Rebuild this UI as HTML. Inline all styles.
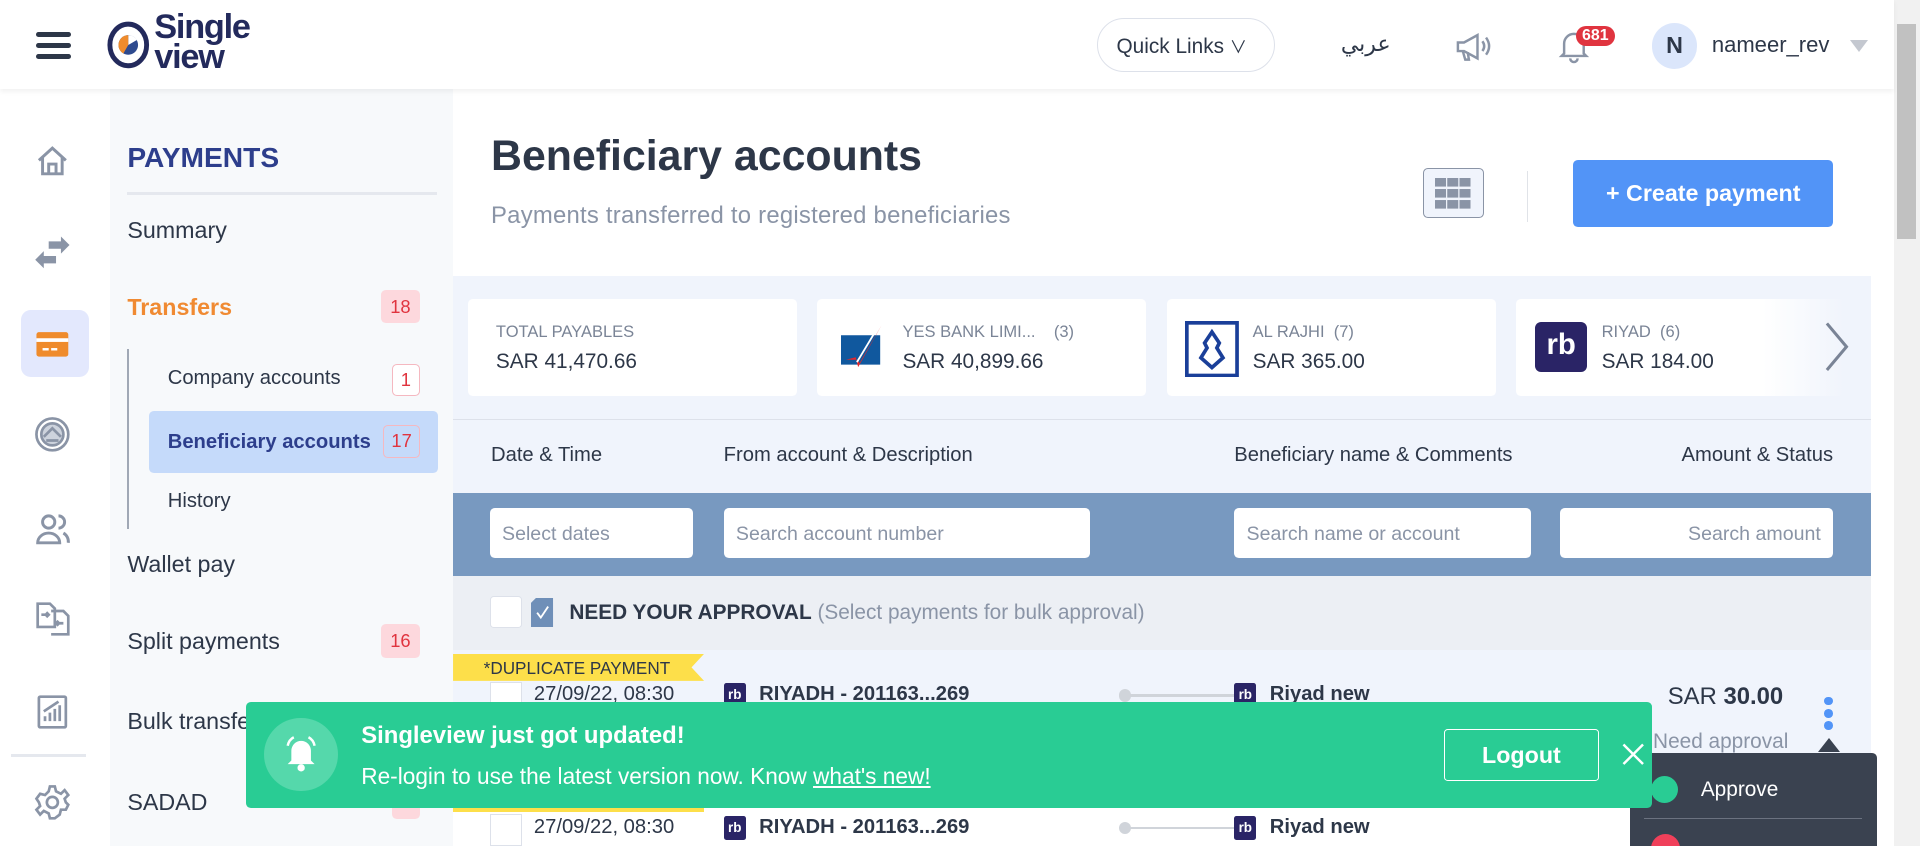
<!DOCTYPE html>
<html><head><meta charset="utf-8"><style>
*{box-sizing:border-box;margin:0;padding:0}
html,body{width:1920px;height:846px;overflow:hidden;background:#fff}
#r{zoom:1.22449;width:1568px;height:691px;position:relative;overflow:hidden;font-family:"Liberation Sans","Noto Sans CJK SC",sans-serif;color:#2d3748}
.a{position:absolute}
.t{white-space:nowrap}
.badge{position:absolute;font-size:15px;text-align:center;border-radius:4px}
.inp{position:absolute;background:#fff;border-radius:4px;height:41px;font-size:16px;color:#8a94a6;padding:12px 10px;white-space:nowrap}
.card{position:absolute;top:244px;height:79px;width:269px;background:#fff;border-radius:4px}
.card .l{position:absolute;top:19px;font-size:13.5px;color:#7a8496;white-space:nowrap}
.card .v{position:absolute;top:42px;font-size:17px;color:#2d3748;white-space:nowrap}
.ic{position:absolute;left:28px}
.rb{position:absolute;width:18px;height:20px;background:#2a2466;border-radius:2px;color:#fff;font-size:11px;font-weight:bold;text-align:center;line-height:20px}
</style></head><body><div id="r">
<!-- header -->
<div class="a" style="left:0;top:0;width:1547px;height:73px;background:#fff;box-shadow:0 2px 4px rgba(0,0,0,.06);z-index:2">
 <div class="a" style="left:29px;top:26px;width:29px;height:4px;background:#2d3748;border-radius:2px"></div>
 <div class="a" style="left:29px;top:35px;width:29px;height:4px;background:#2d3748;border-radius:2px"></div>
 <div class="a" style="left:29px;top:44px;width:29px;height:4px;background:#2d3748;border-radius:2px"></div>
 <svg class="a" style="left:86px;top:15px" width="40" height="44" viewBox="0 0 40 44"><ellipse cx="19" cy="22" rx="15" ry="17" fill="none" stroke="#232a5c" stroke-width="4"/><circle cx="19" cy="22" r="8" fill="#2e4a8f"/><path d="M19 22 L19 14 A8 8 0 0 1 26 18 Z" fill="#fff"/><path d="M19 22 L11 22 A8 8 0 0 1 19 14 Z" fill="#ef8b2c"/><path d="M19 22 L11 22 A8 8 0 0 0 15 29 Z" fill="#ef8b2c"/></svg>
 <div class="a t" style="left:126px;top:11px;font-size:28px;font-weight:bold;line-height:24px;color:#232a5c;letter-spacing:-1px">Single<br>view</div>
 <div class="a t" style="left:896px;top:15px;width:145px;height:44px;border:1px solid #dde1ea;border-radius:22px;font-size:17px;padding:11px 15px">Quick Links <span style="font-size:14px">&#8744;</span></div>
 <div class="a t" style="left:1095px;top:25px;font-size:18px">عربي</div>
 <svg class="a" style="left:1187px;top:24px" width="34" height="28" viewBox="0 0 34 28" fill="none" stroke="#8a94a6" stroke-width="2"><path d="M4 11 L4 18 L9 18 L20 24 L20 5 L9 11 Z"/><path d="M8 18 L10 25 L13 25 L12 19"/><path d="M24 10 Q27 14 24 18"/><path d="M27 7 Q32 14 27 21"/></svg>
 <svg class="a" style="left:1272px;top:24px" width="26" height="28" viewBox="0 0 26 28" fill="none" stroke="#8a94a6" stroke-width="2"><path d="M5 20 L5 12 A8 8 0 0 1 21 12 L21 20 L23 22 L3 22 Z"/><path d="M10 24 A3 3 0 0 0 16 24"/></svg>
 <div class="a t" style="left:1287px;top:21px;background:#e0343f;color:#fff;border-radius:9px;font-size:13px;font-weight:bold;padding:1px 5px">681</div>
 <div class="a" style="left:1349px;top:19px;width:37px;height:37px;border-radius:50%;background:#dbe6fb;font-size:19px;font-weight:bold;text-align:center;line-height:37px">N</div>
 <div class="a t" style="left:1398px;top:26px;font-size:18px">nameer_rev</div>
 <div class="a" style="left:1511px;top:33px;border-left:8px solid transparent;border-right:8px solid transparent;border-top:10px solid #c4c8d0"></div>
</div>
<!-- scrollbar -->
<div class="a" style="left:1547px;top:0;width:21px;height:691px;background:#f1f1f1"></div>
<div class="a" style="left:1549px;top:20px;width:16px;height:175px;background:#c1c1c1"></div>
<!-- icon rail -->
<div class="a" style="left:0;top:73px;width:90px;height:618px;background:#fff"></div>
<svg class="ic" style="top:116px" width="30" height="30" viewBox="0 0 30 30" fill="none" stroke="#8a94a6" stroke-width="2.4"><path d="M4 15 L15 5 L26 15 M7 12 L7 26 L23 26 L23 12 M12 26 L12 18 L18 18 L18 26"/></svg>
<svg class="ic" style="top:191px" width="30" height="30" viewBox="0 0 30 30" fill="#8a94a6"><path d="M12 6 L22 6 L22 2 L29 9 L22 16 L22 12 L12 12 Z"/><path d="M18 18 L8 18 L8 14 L1 21 L8 28 L8 24 L18 24 Z"/></svg>
<div class="a" style="left:17px;top:253px;width:56px;height:55px;background:#e3e8fd;border-radius:8px"></div>
<svg class="ic" style="top:266px" width="30" height="30" viewBox="0 0 30 30"><rect x="2" y="5" width="26" height="20" rx="2" fill="#ef8b2c"/><rect x="2" y="10" width="26" height="3" fill="#fff"/><rect x="7" y="18" width="5" height="2" fill="#fff"/><rect x="14" y="18" width="5" height="2" fill="#fff"/></svg>
<svg class="ic" style="top:340px" width="30" height="30" viewBox="0 0 30 30" fill="none" stroke="#8a94a6" stroke-width="2.2"><circle cx="15" cy="15" r="13"/><circle cx="15" cy="15" r="9" fill="#cdd3dd"/><path d="M8 17 L15 10 L22 17 M10 20 L20 20"/></svg>
<svg class="ic" style="top:417px" width="30" height="30" viewBox="0 0 30 30" fill="none" stroke="#8a94a6" stroke-width="2.4"><circle cx="12" cy="9" r="5"/><path d="M3 26 A9 8 0 0 1 21 26 Z"/><path d="M20 4 A5 5 0 0 1 20 14 M24 18 A8 8 0 0 1 28 26"/></svg>
<svg class="ic" style="top:490px" width="30" height="30" viewBox="0 0 30 30" fill="none" stroke="#8a94a6" stroke-width="2.2"><path d="M3 3 L13 3 L17 7 L17 22 L3 22 Z"/><path d="M14 9 L24 9 L28 13 L28 28 L14 28"/><path d="M6 12 L12 12 M10 10 L12 12 L10 14 M24 19 L18 19 M20 17 L18 19 L20 21"/></svg>
<svg class="ic" style="top:566px" width="30" height="30" viewBox="0 0 30 30" fill="none" stroke="#8a94a6" stroke-width="2.2"><rect x="4" y="3" width="22" height="25" rx="1"/><path d="M9 23 L9 19 M13 23 L13 16 M17 23 L17 13 M21 23 L21 10 M8 15 L20 7"/></svg>
<div class="a" style="left:9px;top:616px;width:61px;height:2px;background:#e5e8ee"></div>
<svg class="ic" style="top:640px" width="30" height="30" viewBox="0 0 30 30" fill="none" stroke="#8a94a6" stroke-width="2.2"><circle cx="15" cy="15" r="4.5"/><path d="M13 2 L17 2 L18 6 L22 8 L25 5 L28 9 L25 12 L26 15 L28 17 L26 21 L22 21 L21 25 L17 28 L13 28 L12 24 L8 22 L5 25 L2 21 L5 18 L4 15 L2 12 L5 8 L9 9 L12 6 Z"/></svg>
<!-- sidebar -->
<div class="a" style="left:90px;top:73px;width:280px;height:618px;background:#f7f9fb"></div>
<div class="a t" style="left:104px;top:116px;font-size:23px;font-weight:bold;color:#2d3e8c">PAYMENTS</div>
<div class="a" style="left:104px;top:157px;width:253px;height:2px;background:#e5e8ee"></div>
<div class="a t" style="left:104px;top:177px;font-size:19px">Summary</div>
<div class="a t" style="left:104px;top:240px;font-size:19px;font-weight:bold;color:#f08a32">Transfers</div>
<div class="badge" style="left:311px;top:237px;width:32px;height:27px;background:#fdd8dd;color:#e0343f;line-height:27px">18</div>
<div class="a" style="left:104px;top:285px;width:1px;height:147px;background:#a0a8b5"></div>
<div class="a t" style="left:137px;top:300px;font-size:16.5px">Company accounts</div>
<div class="badge" style="left:320px;top:297px;width:23px;height:26px;border:1px solid #f5b8c0;color:#e0343f;line-height:24px;background:#fff">1</div>
<div class="a" style="left:122px;top:336px;width:236px;height:50px;background:#c5dafa;border-radius:4px"></div>
<div class="a t" style="left:137px;top:352px;font-size:16.5px;font-weight:bold;color:#2d3e8c">Beneficiary accounts</div>
<div class="badge" style="left:313px;top:347px;width:30px;height:27px;border:1px solid #f5b8c0;color:#e0343f;line-height:25px">17</div>
<div class="a t" style="left:137px;top:400px;font-size:16.5px">History</div>
<div class="a t" style="left:104px;top:450px;font-size:19px">Wallet pay</div>
<div class="a t" style="left:104px;top:513px;font-size:19px">Split payments</div>
<div class="badge" style="left:311px;top:510px;width:32px;height:27px;background:#fdd8dd;color:#e0343f;line-height:27px">16</div>
<div class="a t" style="left:104px;top:578px;font-size:19px">Bulk transfers</div>
<div class="a t" style="left:104px;top:644px;font-size:19px">SADAD</div>
<div class="badge" style="left:320px;top:645px;width:23px;height:24px;background:#fdd8dd;color:#e0343f">2</div>
<!-- main header -->
<div class="a t" style="left:401px;top:108px;font-size:35px;font-weight:bold;color:#2d3748">Beneficiary accounts</div>
<div class="a t" style="left:401px;top:165px;font-size:19.5px;color:#8a94a6;letter-spacing:0.2px">Payments transferred to registered beneficiaries</div>
<div class="a" style="left:1162px;top:137px;width:50px;height:41px;border:1px solid #8a94a6;border-radius:4px;background:#f0f4fc"></div>
<svg class="a" style="left:1172px;top:145px" width="30" height="26"><g fill="#8a94a6"><rect x="0" y="0" width="9" height="7"/><rect x="10" y="0" width="9" height="7"/><rect x="20" y="0" width="9" height="7"/><rect x="0" y="9" width="9" height="7"/><rect x="10" y="9" width="9" height="7"/><rect x="20" y="9" width="9" height="7"/><rect x="0" y="18" width="9" height="7"/><rect x="10" y="18" width="9" height="7"/><rect x="20" y="18" width="9" height="7"/></g></svg>
<div class="a" style="left:1247px;top:140px;width:1px;height:41px;background:#e0e3e8"></div>
<div class="a t" style="left:1285px;top:131px;width:212px;height:54px;background:#5294f7;border-radius:4px;color:#fff;font-size:19px;font-weight:bold;text-align:center;line-height:54px">+ Create payment</div>
<!-- cards -->
<div class="a" style="left:370px;top:225px;width:1158px;height:118px;background:#f0f4fc"></div>
<div class="card" style="left:382px"><div class="l" style="left:23px">TOTAL PAYABLES</div><div class="v" style="left:23px">SAR 41,470.66</div></div>
<div class="card" style="left:667px"><svg class="a" style="left:20px;top:20px" width="36" height="40"><rect x="0" y="10" width="32" height="24" fill="#10589e"/><path d="M33 2 L14 36 L12 28 L4 30 L14 30 L15 33 Z" fill="#e52629"/><path d="M31 2 L13 32" stroke="#fff" stroke-width="1.5"/></svg><div class="l" style="left:70px">YES BANK LIMI...&nbsp;&nbsp;&nbsp;&nbsp;(3)</div><div class="v" style="left:70px">SAR 40,899.66</div></div>
<div class="card" style="left:953px"><svg class="a" style="left:15px;top:18px" width="44" height="46"><rect x="1.5" y="1.5" width="41" height="43" fill="#fff" stroke="#1a3f99" stroke-width="3"/><path d="M22 9 L28 18 L26 22 L31 30 L22 38 L13 30 L18 22 L16 18 Z" fill="none" stroke="#1a3f99" stroke-width="3"/></svg><div class="l" style="left:70px">AL RAJHI&nbsp;&nbsp;(7)</div><div class="v" style="left:70px">SAR 365.00</div></div>
<div class="card" style="left:1238px;background:linear-gradient(90deg,#fff 75%,#f0f4fc)"><div class="a" style="left:16px;top:19px;width:42px;height:41px;background:#2a2466;border-radius:5px;color:#fff;font-size:24px;font-weight:bold;text-align:center;line-height:38px">rb</div><div class="l" style="left:70px">RIYAD&nbsp;&nbsp;(6)</div><div class="v" style="left:70px">SAR 184.00</div></div>
<svg class="a" style="left:1488px;top:262px" width="24" height="42" fill="none" stroke="#7a8496" stroke-width="2.5"><path d="M4 2 L20 21 L4 40"/></svg>
<div class="a" style="left:370px;top:342px;width:1158px;height:1px;background:#dde1ea"></div>
<!-- columns -->
<div class="a" style="left:370px;top:343px;width:1158px;height:60px;background:#f0f4fc"></div>
<div class="a t" style="left:401px;top:363px;font-size:16.5px">Date &amp; Time</div>
<div class="a t" style="left:591px;top:363px;font-size:16.5px">From account &amp; Description</div>
<div class="a t" style="left:1008px;top:363px;font-size:16.5px">Beneficiary name &amp; Comments</div>
<div class="a t" style="left:1297px;width:200px;text-align:right;top:363px;font-size:16.5px">Amount &amp; Status</div>
<div class="a" style="left:370px;top:403px;width:1158px;height:67px;background:#7899c0"></div>
<div class="inp" style="left:400px;top:415px;width:166px">Select dates</div>
<div class="inp" style="left:591px;top:415px;width:299px">Search account number</div>
<div class="inp" style="left:1008px;top:415px;width:242px">Search name or account</div>
<div class="inp" style="left:1274px;top:415px;width:223px;text-align:right">Search amount</div>
<div class="a" style="left:370px;top:470px;width:1158px;height:61px;background:#eceff4"></div>
<div class="a" style="left:400px;top:487px;width:26px;height:26px;background:#fff;border:1px solid #dde1ea;border-radius:3px"></div>
<svg class="a" style="left:434px;top:488px" width="20" height="24"><path d="M4 0 L18 0 L18 24 L0 24 L0 4 Z" fill="#6f8fb8"/><path d="M5 12 L8 16 L14 7" stroke="#fff" stroke-width="1.5" fill="none"/></svg>
<div class="a t" style="left:465px;top:491px;font-size:17px"><b>NEED YOUR APPROVAL</b> <span style="color:#8a94a6">(Select payments for bulk approval)</span></div>
<!-- rows -->
<div class="a" style="left:370px;top:531px;width:1158px;height:128px;background:#f0f4fc"></div>
<div class="a" style="left:370px;top:659px;width:1158px;height:32px;background:#fff"></div>
<div class="a t" style="left:370px;top:534px;width:205px;height:22px;background:#fddf4a;clip-path:polygon(0 0,100% 0,95% 50%,100% 100%,0 100%);font-size:14px;padding:3px 0 0 25px">*DUPLICATE PAYMENT</div>
<div class="a" style="left:370px;top:655px;width:205px;height:8px;background:#fddf4a"></div>
<div class="a" style="left:400px;top:557px;width:26px;height:26px;background:#fff;border:1px solid #dde1ea"></div>
<div class="a t" style="left:436px;top:558px;font-size:16.5px">27/09/22, 08:30</div>
<div class="rb" style="left:591px;top:558px">rb</div>
<div class="a t" style="left:620px;top:558px;font-size:16.5px;font-weight:bold">RIYADH - 201163...269</div>
<div class="a" style="left:914px;top:563px;width:10px;height:10px;border-radius:50%;background:#d0d4da"></div>
<div class="a" style="left:920px;top:567px;width:88px;height:2px;background:#d0d4da"></div>
<div class="rb" style="left:1008px;top:558px">rb</div>
<div class="a t" style="left:1037px;top:558px;font-size:16.5px;font-weight:bold">Riyad new</div>
<div class="a t" style="left:1362px;top:558px;font-size:19.5px">SAR <b>30.00</b></div>
<div class="a t" style="left:1350px;top:596px;font-size:17px;color:#8a94a6">Need approval</div>
<div class="a" style="left:1490px;top:569px;width:7px;height:7px;border-radius:50%;background:#5294f7"></div>
<div class="a" style="left:1490px;top:579px;width:7px;height:7px;border-radius:50%;background:#5294f7"></div>
<div class="a" style="left:1490px;top:589px;width:7px;height:7px;border-radius:50%;background:#5294f7"></div>
<div class="a" style="left:400px;top:665px;width:26px;height:26px;background:#fff;border:1px solid #dde1ea"></div>
<div class="a t" style="left:436px;top:666px;font-size:16.5px">27/09/22, 08:30</div>
<div class="rb" style="left:591px;top:666px">rb</div>
<div class="a t" style="left:620px;top:666px;font-size:16.5px;font-weight:bold">RIYADH - 201163...269</div>
<div class="a" style="left:914px;top:671px;width:10px;height:10px;border-radius:50%;background:#d0d4da"></div>
<div class="a" style="left:920px;top:675px;width:88px;height:2px;background:#d0d4da"></div>
<div class="rb" style="left:1008px;top:666px">rb</div>
<div class="a t" style="left:1037px;top:666px;font-size:16.5px;font-weight:bold">Riyad new</div>
<!-- dropdown -->
<div class="a" style="left:1485px;top:603px;border-left:9px solid transparent;border-right:9px solid transparent;border-bottom:12px solid #3a4250"></div>
<div class="a" style="left:1331px;top:615px;width:202px;height:80px;background:#3a4250;border-radius:4px"></div>
<div class="a" style="left:1348px;top:634px;width:22px;height:22px;border-radius:50%;background:#29cc94"></div>
<div class="a t" style="left:1389px;top:635px;font-size:17px;color:#fff">Approve</div>
<div class="a" style="left:1343px;top:668px;width:178px;height:1px;background:#6b7280"></div>
<div class="a" style="left:1348px;top:681px;width:24px;height:24px;border-radius:50%;background:#f0405a"></div>
<!-- toast -->
<div class="a" style="left:201px;top:573px;width:1148px;height:87px;background:#29cc94;border-radius:4px"></div>
<div class="a" style="left:216px;top:586px;width:60px;height:60px;border-radius:50%;background:#55d8ab"></div>
<svg class="a" style="left:232px;top:601px" width="28" height="30" fill="#fff"><path d="M6 20 L6 12 A8 8 0 0 1 22 12 L22 20 L25 23 L3 23 Z"/><circle cx="14" cy="26" r="3"/><path d="M3 8 Q4 3 8 1" stroke="#fff" stroke-width="2" fill="none"/><path d="M25 8 Q24 3 20 1" stroke="#fff" stroke-width="2" fill="none"/></svg>
<div class="a t" style="left:295px;top:590px;font-size:19.5px;font-weight:bold;color:#fff">Singleview just got updated!</div>
<div class="a t" style="left:295px;top:623px;font-size:18.5px;color:#fff">Re-login to use the latest version now. Know <u>what's new!</u></div>
<div class="a t" style="left:1179px;top:595px;width:127px;height:43px;border:1px solid #fff;border-radius:3px;color:#fff;font-size:19px;font-weight:bold;text-align:center;line-height:41px">Logout</div>
<svg class="a" style="left:1324px;top:606px" width="20" height="20" stroke="#fff" stroke-width="2"><path d="M2 2 L18 18 M18 2 L2 18"/></svg>
</div></body></html>
